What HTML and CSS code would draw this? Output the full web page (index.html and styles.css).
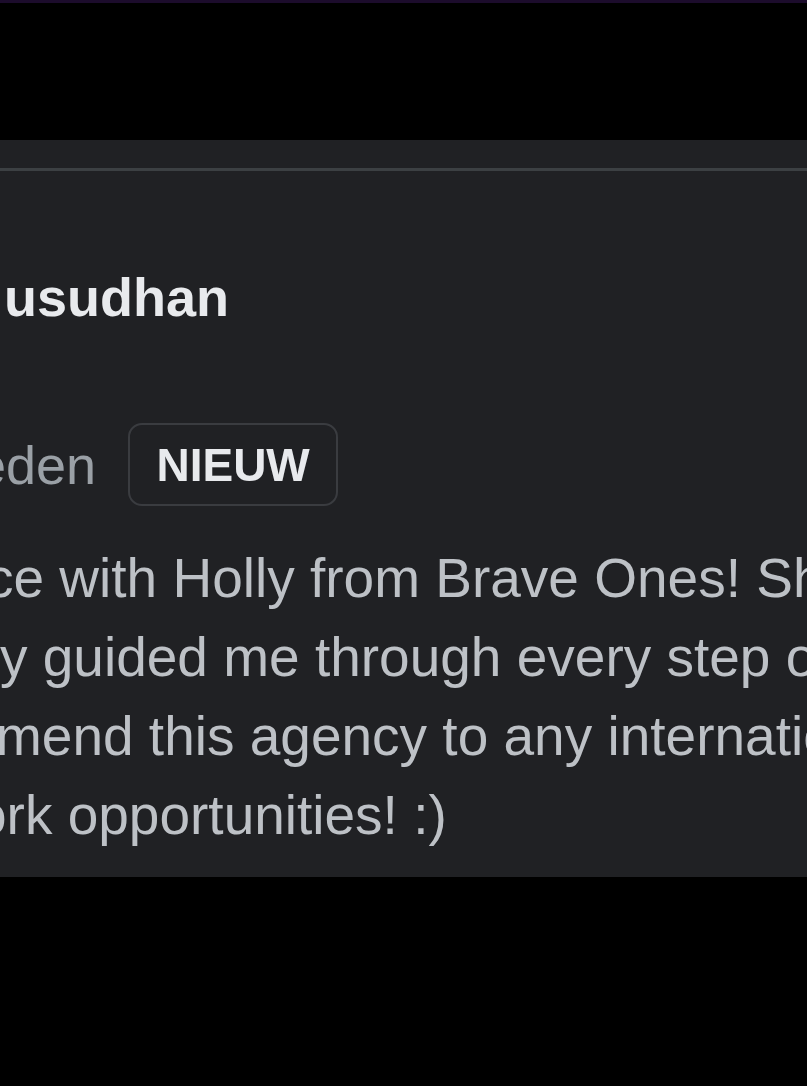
FILE: index.html
```html
<!DOCTYPE html>
<html lang="nl">
<head>
<meta charset="utf-8">
<title>Review</title>
<link rel="stylesheet" href="styles.css">
</head>
<body>
<div class="topbar"></div>
<section class="card">
  <div class="divider"></div>
  <div class="name">usudhan</div>
  <div class="meta">
    <span class="date">eden</span>
    <span class="badge">NIEUW</span>
  </div>
  <div class="review">
    <span class="line l1">ce with Holly from Brave Ones! She</span>
    <span class="line l2">y guided me through every step of</span>
    <span class="line l3">mend this agency to any international</span>
    <span class="line l4">ork opportunities! :)</span>
  </div>
</section>
</body>
</html>
```
FILE: styles.css
```css
html, body {
  margin: 0;
  padding: 0;
  background: #000;
  width: 807px;
  height: 1086px;
  overflow: hidden;
  font-family: "Liberation Sans", Arial, sans-serif;
}
.topbar {
  height: 3px;
  background: #1c0c2c;
}
.card {
  margin-top: 137px;
  background: #202124;
  padding-top: 28px;
  padding-bottom: 22px;
  overflow: hidden;
  filter: blur(0.6px);
}
.divider {
  height: 3px;
  background: #3c4043;
}
.name {
  margin-top: 93px;
  padding-left: 4px;
  font-size: 54px;
  line-height: 66px;
  font-weight: 700;
  color: #e8eaed;
  white-space: nowrap;
}
.meta {
  margin-top: 93px;
  display: flex;
  align-items: center;
  gap: 32px;
  height: 83px;
}
.date {
  margin-left: -24px;
  font-size: 54px;
  color: #9aa0a6;
  white-space: nowrap;
}
.badge {
  box-sizing: border-box;
  height: 83px;
  width: 210px;
  display: flex;
  align-items: center;
  justify-content: center;
  border: 2px solid #3a3c40;
  border-radius: 14px;
  font-size: 46px;
  font-weight: 700;
  color: #e8eaed;
}
.review {
  margin-top: 33px;
  font-size: 55px;
  line-height: 79px;
  color: #bdc1c6;
}
.line {
  display: block;
  white-space: nowrap;
}
.l1 { margin-left: -14px; }
.l2 { margin-left: 0; }
.l3 { margin-left: -4px; }
.l4 { margin-left: -24px; }
```
